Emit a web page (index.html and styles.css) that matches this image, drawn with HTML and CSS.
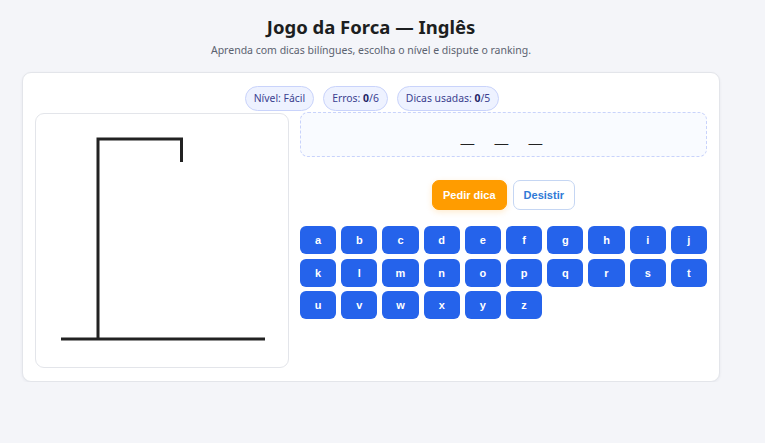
FILE: index.html
```html
<!DOCTYPE html>
<html lang="pt">
<head>
<meta charset="utf-8">
<title>Jogo da Forca — Inglês</title>
<link rel="stylesheet" href="styles.css">
</head>
<body>
<div class="wrap">
<header class="head">
  <h1 class="title">Jogo da Forca — Inglês</h1>
  <p class="subtitle">Aprenda com dicas bilíngues, escolha o nível e dispute o ranking.</p>
</header>
<main class="card">
  <div class="pills">
    <span class="pill">Nível: Fácil</span>
    <span class="pill">Erros: <b>0</b>/6</span>
    <span class="pill">Dicas usadas: <b>0</b>/5</span>
  </div>
  <div class="game">
    <div class="gallows">
      <svg width="252" height="252" viewBox="0 0 252 252">
        <g stroke="#222" stroke-width="3" fill="none" stroke-linecap="butt">
          <line x1="25" y1="225" x2="229" y2="225"/>
          <polyline points="62,225 62,25 145.5,25 145.5,48"/>
        </g>
      </svg>
    </div>
    <div class="side">
      <div class="word">_ _ _</div>
      <div class="actions">
        <button class="btn btn-hint">Pedir dica</button>
        <button class="btn btn-quit">Desistir</button>
      </div>
      <div class="keys">
        <button class="key">a</button><button class="key">b</button><button class="key">c</button><button class="key">d</button><button class="key">e</button><button class="key">f</button><button class="key">g</button><button class="key">h</button><button class="key">i</button><button class="key">j</button>
        <button class="key">k</button><button class="key">l</button><button class="key">m</button><button class="key">n</button><button class="key">o</button><button class="key">p</button><button class="key">q</button><button class="key">r</button><button class="key">s</button><button class="key">t</button>
        <button class="key">u</button><button class="key">v</button><button class="key">w</button><button class="key">x</button><button class="key">y</button><button class="key">z</button>
      </div>
    </div>
  </div>
</main>
</div>
</body>
</html>
```
FILE: styles.css
```css
* { box-sizing: border-box; }
html, body { margin: 0; padding: 0; }
body {
  background: #f4f5f9;
  font-family: "Noto Sans", "Open Sans", sans-serif;
  color: #1f2328;
}
.wrap {
  width: 698px;
  margin-left: 22px;
}
.head {
  text-align: center;
  padding-top: 14px;
}
.title {
  margin: 0;
  font-size: 18.5px;
  font-weight: 700;
  line-height: 26px;
  color: #1c1e21;
}
.subtitle {
  margin: 3px 0 0;
  font-size: 10.5px;
  line-height: 14px;
  color: #5b6270;
}
.card {
  margin-top: 15px;
  background: #fff;
  border: 1px solid #e3e5ea;
  border-radius: 9px;
  box-shadow: 0 1px 3px rgba(20, 30, 60, 0.06);
  padding: 13px 12px 13px 12px;
}
.pills {
  display: flex;
  justify-content: center;
  gap: 9px;
  padding-left: 2px;
}
.pill {
  display: inline-block;
  height: 25px;
  line-height: 23px;
  padding: 0 8px;
  border-radius: 13px;
  background: #eef2ff;
  border: 1px solid #c9d3fb;
  color: #3b3f8f;
  font-size: 10.4px;
  white-space: nowrap;
}
.pill b { font-weight: 700; color: #1e2466; }
.game {
  display: flex;
  gap: 11px;
  margin-top: 1px;
}
.gallows {
  width: 254px;
  height: 255px;
  border: 1px solid #e3e5ea;
  border-radius: 9px;
  background: #fff;
  flex: none;
  margin-top: 1px;
}
.gallows svg { display: block; }
.side {
  flex: 1;
  display: flex;
  flex-direction: column;
}
.word {
  height: 45px;
  border: 1px dashed #c9d3fb;
  border-radius: 8px;
  background: #f9fbff;
  text-align: center;
  font-family: "Liberation Sans", Arial, sans-serif;
  font-weight: 700;
  font-size: 24px;
  line-height: 28px;
  padding-top: 7px;
  letter-spacing: 7px;
  padding-left: 3px;
  color: #222;
}
.actions {
  display: flex;
  justify-content: center;
  gap: 6px;
  margin-top: 23px;
}
.btn {
  height: 30px;
  border-radius: 7px;
  font-family: "Liberation Sans", Arial, sans-serif;
  font-weight: 700;
  font-size: 11px;
  padding: 0 10px;
  white-space: nowrap;
  cursor: pointer;
}
.btn-hint {
  background: #ff9c00;
  border: 1px solid #ff9c00;
  color: #fff;
  box-shadow: 0 2px 6px rgba(255, 156, 0, 0.2);
}
.btn-quit {
  background: #fff;
  border: 1px solid #c5d6f3;
  color: #2f7ad6;
}
.keys {
  display: grid;
  grid-template-columns: repeat(10, 1fr);
  column-gap: 5px;
  row-gap: 4.5px;
  margin-top: 16px;
}
.key {
  height: 28px;
  border: none;
  border-radius: 6px;
  background: #2563eb;
  color: #fff;
  font-family: "Liberation Sans", Arial, sans-serif;
  font-weight: 700;
  font-size: 11px;
  padding: 0;
  cursor: pointer;
}
```
